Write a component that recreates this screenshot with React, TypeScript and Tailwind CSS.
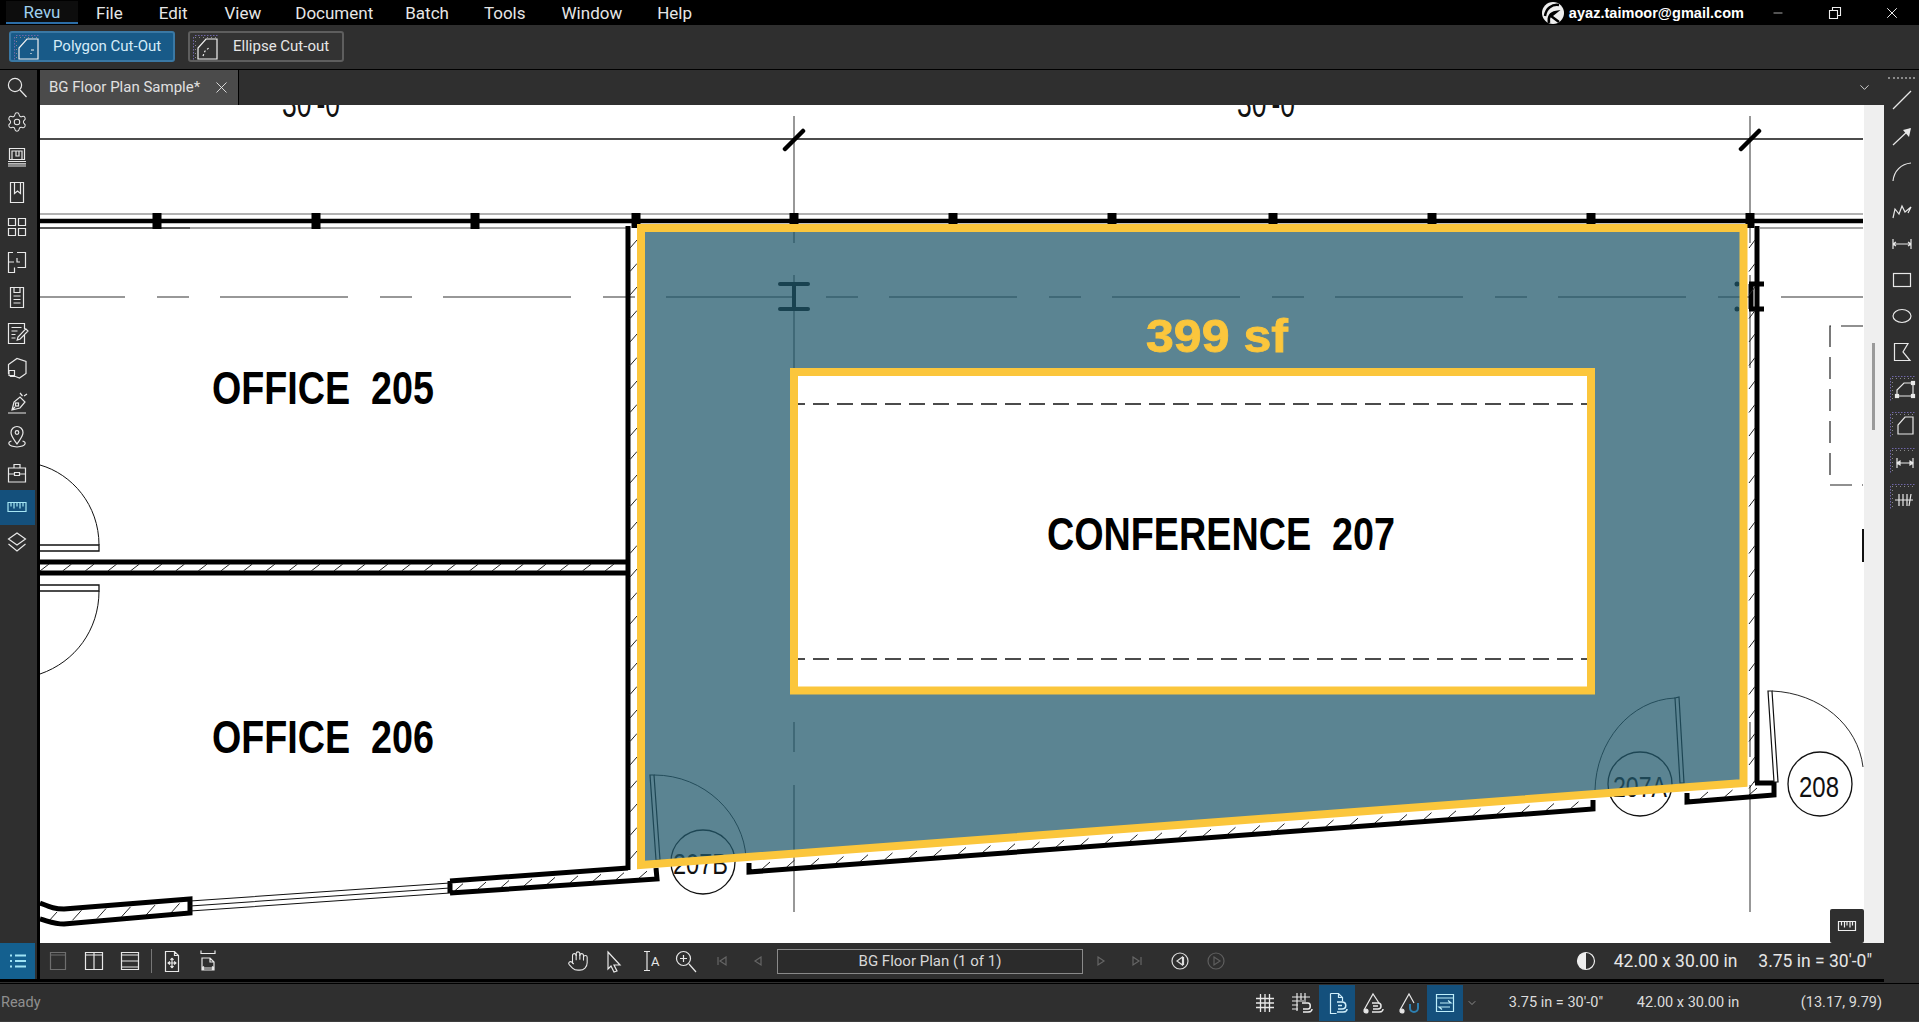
import React from "react";
import { Settings, Hand, ChevronDown, X, Minus } from "lucide-react";

const S = "#e8e8e8";
function Ic({ w = 24, h = 24, c = S, sw = 1.2, children }: { w?: number; h?: number; c?: string; sw?: number; children: React.ReactNode }) {
  return (
    <svg width={w} height={h} viewBox={`0 0 ${w} ${h}`} fill="none" stroke={c} strokeWidth={sw} className="block shrink-0">
      {children}
    </svg>
  );
}

function Ruler({ c = "#6f66a8" }: { c?: string }) {
  return (
    <g stroke={c} strokeWidth={1}>
      <path d="M4 2.500H27" strokeDasharray="1.500 1.500" />
      <path d="M2.500 4V27" strokeDasharray="1.500 1.500" />
      <path d="M4 4.500H27" stroke="#8a8a8a" strokeDasharray="1 3" />
      <path d="M4.500 4V27" stroke="#8a8a8a" strokeDasharray="1 3" />
    </g>
  );
}

const leftIcons: React.ReactNode[] = [
  <Ic key="a"><circle cx="10" cy="10" r="6.6" /><path d="M15 15l6.5 7" /></Ic>,
  <Settings key="b" size={22} strokeWidth={1.1} color={S} />,
  <Ic key="c"><path d="M4.500 3.500h15v11h-15zM7 14V6h10v8M11 6v5h3V6M3 16.500h18M3 18.800h18M3 21h18" /></Ic>,
  <Ic key="d"><path d="M5.500 2.500h13v20h-13zM9.500 2.500v11l3-2.500 3 2.500v-11" /></Ic>,
  <Ic key="e"><path d="M3.500 3.500h7v7h-7zM13.500 3.500h7v7h-7zM3.500 13.500h7v7h-7zM13.500 13.500h7v7h-7z" /></Ic>,
  <Ic key="f"><path d="M12 2.500h8.500v15h-8M8 2.500H3.500v20h6v-5M3.500 12h5.500M15 12h-3V8" /></Ic>,
  <Ic key="g"><path d="M5.500 2.500h13v20h-13zM9 2.500v5h6v-5M8.500 11h7M8.500 14.500h7M8.500 18h7" /></Ic>,
  <Ic key="h"><path d="M19.500 9V3.500H3.500v20h16V15M6.500 7.500h10M6.500 11h6M6.500 14.500h4M6.500 18h4M13 17l-.8 3 3-1L23 11l-2.200-2.200z" /></Ic>,
  <Ic key="i"><path d="M3.500 9.500L12 3.500l9 3v12l-6.500 4.500-4-1.500H5.500l-2-3zM4 15.500h5.500v5H4z" /></Ic>,
  <Ic key="j"><path d="M3 23h18M7 20l2-8 6-5 5 5-5 6zM15 3l2.500 3M19 6l3-2M7 20l3-3" /><rect x="10.500" y="13" width="3" height="3" /></Ic>,
  <Ic key="k"><path d="M12 19c-4-6-6-8-6-11.500a6 6 0 0 1 12 0C18 11 16 13 12 19z" /><circle cx="12" cy="7.500" r="1.800" /><path d="M6.500 16c-4 1-4.500 5 5.500 6 10-1 9.500-5 5.500-6" /></Ic>,
  <Ic key="l"><path d="M3.500 8h17v14h-17zM9 8V4.500h6V8M3.500 14h6M14.500 14h6M9.500 12.500h5v3h-5z" /></Ic>,
  <Ic key="m" c="#a6e6f4"><path d="M3 7.500h18v9H3zM6 7.500v4M9 7.500v6M12 7.500v4M15 7.500v6M18 7.500v4" /></Ic>,
  <Ic key="n"><path d="M12 3l8.500 6-8.500 6-8.500-6zM3.500 14l8.500 7 8.500-7" /></Ic>,
];

const rightIcons: React.ReactNode[] = [
  <Ic key="a"><path d="M3 21L21 3" /></Ic>,
  <Ic key="b"><path d="M3 21L20 5" /><path d="M13 6l8-2-2 9z" fill={S} stroke="none" /></Ic>,
  <Ic key="c"><path d="M3 21C4 11 11 4 21 3" /></Ic>,
  <Ic key="d"><path d="M3 22l2-9 4 5 3-8 3 6 6-5-3 6" /></Ic>,
  <Ic key="e"><path d="M3 7v10M21 7v10M3 12h18M3 12l3-2M3 12l3 2M21 12l-3-2M21 12l-3 2" /></Ic>,
  <Ic key="f"><rect x="3.500" y="5.500" width="17" height="13" /></Ic>,
  <Ic key="g"><ellipse cx="12" cy="12" rx="9" ry="6.500" /></Ic>,
  <Ic key="h"><path d="M4.500 3.500L18 3.500 13 12l7 8.500H4.500z" /></Ic>,
  <Ic key="i" w={28} h={28}><Ruler /><path d="M9 22v-6l7-7h9v13z" /><rect x="7.500" y="20.500" width="3" height="3" fill={S} /><rect x="23.500" y="7.500" width="3" height="3" fill={S} /><rect x="23.500" y="20.500" width="3" height="3" fill={S} /></Ic>,
  <Ic key="j" w={28} h={28}><Ruler /><path d="M10 24V15l7-8h8v17z" /></Ic>,
  <Ic key="k" w={28} h={28}><Ruler /><path d="M9 12v10M25 12v10M9 17h16M9 17l3-2v4zM25 17l-3-2v4z" /></Ic>,
  <Ic key="l" w={28} h={28}><Ruler /><path d="M7 18h18M11 12v12M15 12v12M19 12v12M23 12l-2 12" /></Ic>,
];

function Cell({ w = 36, children }: { w?: number; children: React.ReactNode }) {
  return <div className="flex items-center justify-center h-full shrink-0" style={{ width: w }}>{children}</div>;
}

function Hatch() {
  const lines: string[] = [];
  for (let y = 240; y < 860; y += 23.5) lines.push(`M630 ${y + 8}L637 ${y}`);
  for (let y = 240; y < 790; y += 23.5) lines.push(`M1749 ${y + 8}L1755 ${y}`);
  for (let x = 40; x < 625; x += 22.6) lines.push(`M${x} 571L${x + 9} 564`);
  for (let x = 762; x < 1590; x += 24.5) {
    const y = 872 - (x - 749) * 0.0746;
    lines.push(`M${x} ${y - 2}L${x + 8} ${y - 9}`);
  }
  for (let x = 1700; x < 1768; x += 24.5) {
    const y = 802 - (x - 1687) * 0.08;
    lines.push(`M${x} ${y - 2}L${x + 8} ${y - 9}`);
  }
  for (let x = 455; x < 650; x += 23) {
    const y = 893 - (x - 450) * 0.068;
    lines.push(`M${x} ${y - 2}L${x + 8} ${y - 9}`);
  }
  for (let x = 48; x < 185; x += 24.5) {
    const y = 923 - (x - 48) * 0.07;
    lines.push(`M${x} ${y - 1}L${x + 9} ${y - 11}`);
  }
  return <path d={lines.join("")} stroke="#222" strokeWidth={1} fill="none" />;
}

function Plan() {
  const cols = [157, 316, 475, 636, 794, 953, 1112, 1273, 1432, 1591, 1750];
  const font = { fontFamily: '"Liberation Sans", Arial, sans-serif' };
  return (
    <svg width={1824} height={838} viewBox="40 105 1824 838" className="block shrink-0 bg-white" style={font}>
      <text x={282} y={117} fontSize={38} textLength={58} lengthAdjust="spacingAndGlyphs" fill="#111">30'-0</text>
      <text x={1237} y={117} fontSize={38} textLength={58} lengthAdjust="spacingAndGlyphs" fill="#111">30'-0</text>
      <path d="M40 139H1863" stroke="#111" strokeWidth={1.3} />
      <path d="M794 116V243M794 275V368M794 722V752M794 785V912M1750 116V243M1750 275V368M1750 722V757M1750 785V912" stroke="#777" strokeWidth={1.5} fill="none" />
      <path d="M785 149L803 131M1741 149L1759 131" stroke="#000" strokeWidth={4.5} strokeLinecap="round" />
      <path d="M40 214H1863" stroke="#666" strokeWidth={1.2} />
      <path d="M40 221H1863" stroke="#000" strokeWidth={4.5} />
      <path d="M40 228H190" stroke="#222" strokeWidth={1.5} />
      <path d="M190 228H630M1760 228H1863" stroke="#888" strokeWidth={1.5} />
      {cols.map((x) => (
        <rect key={x} x={x - 4.5} y={213} width={9} height={x <= 475 ? 16 : 15} fill="#000" />
      ))}
      <path d="M40 297H1863" stroke="#333" strokeWidth={1.1} strokeDasharray="128 32 32 31" strokeDashoffset={43} />

      {/* walls */}
      <path d="M628 226V870M40 562H630M40 573H630" stroke="#000" strokeWidth={5} fill="none" />
      <path d="M1757 226V783M1749 284H1764M1749 309H1764M1751 284V309" stroke="#000" strokeWidth={5} fill="none" />
      <path d="M780 284H808M780 309H808M794 284V309" stroke="#000" strokeWidth={4} strokeLinecap="round" fill="none" />
      <circle cx={1737} cy={284} r={2.5} fill="#000" />
      <circle cx={1737} cy={309} r={2.5} fill="#000" />
      <Hatch />
      <path d="M450 881L628 868M450 893L657 879L656 868M40 903C50 907 54 909 64 909L190 899V913L64 924C54 924 48 921 40 919M450 881V893" stroke="#000" strokeWidth={5} fill="none" />
      <path d="M190 901L450 883M190 906L450 888M190 911L450 893" stroke="#111" strokeWidth={1.1} fill="none" />
      <path d="M749 863V872L1593 809V800M1687 793V802L1774 795V783H1755" stroke="#000" strokeWidth={5} fill="none" />

      {/* doors */}
      <path d="M40 545H99V551H40M40 585H99V591H40" stroke="#111" strokeWidth={1.3} fill="#fff" />
      <path d="M40 465C72 474 99 505 99 545M99 591C99 630 75 662 40 674" stroke="#111" strokeWidth={1} fill="none" />
      <path d="M650 775L654 775L660 860H656ZM1675 698L1679 697L1684 783H1680ZM1768 691L1772 691L1778 782H1774Z" stroke="#111" strokeWidth={1.2} fill="#fff" />
      <path d="M654 775C705 775 744 815 746 858M1675 698C1630 700 1596 742 1595 790M1772 691C1820 693 1858 725 1863 767" stroke="#111" strokeWidth={0.9} fill="none" />
      <circle cx={703} cy={862} r={32} fill="#fff" stroke="#111" strokeWidth={1.3} />
      <circle cx={1640} cy={784} r={32} fill="#fff" stroke="#111" strokeWidth={1.3} />
      <circle cx={1820} cy={784} r={32} fill="#fff" stroke="#111" strokeWidth={1.3} />
      <text x={673} y={874} fontSize={30} textLength={55} lengthAdjust="spacingAndGlyphs" fill="#111">207B</text>
      <text x={1613} y={797} fontSize={30} textLength={54} lengthAdjust="spacingAndGlyphs" fill="#111">207A</text>
      <text x={1799} y={797} fontSize={30} textLength={40} lengthAdjust="spacingAndGlyphs" fill="#111">208</text>

      {/* other */}
      <path d="M1863 326H1830V485H1863" stroke="#222" strokeWidth={1.2} strokeDasharray="22 10" fill="none" />
      <path d="M1863 529V562" stroke="#111" strokeWidth={2} />

      {/* labels */}
      <text x={212} y={404} fontSize={46} fontWeight={700} textLength={222} lengthAdjust="spacingAndGlyphs" fill="#000" className="whitespace-pre">OFFICE  205</text>
      <text x={212} y={753} fontSize={46} fontWeight={700} textLength={222} lengthAdjust="spacingAndGlyphs" fill="#000" className="whitespace-pre">OFFICE  206</text>
      <text x={1047} y={550} fontSize={46} fontWeight={700} textLength={348} lengthAdjust="spacingAndGlyphs" fill="#000" className="whitespace-pre">CONFERENCE  207</text>
      <path d="M798 404H1587M798 659H1587" stroke="#111" strokeWidth={1.5} strokeDasharray="16 8" strokeDashoffset={9} />

      {/* area markup */}
      <path d="M641 228H1743.5V783L641 865ZM794 372V690.5H1591V372Z" fill="#22596c" fillOpacity={0.74} fillRule="evenodd" />
      <path d="M641 228H1743.5V783L641 865Z" fill="none" stroke="#fbc63c" strokeWidth={8} />
      <path d="M794 372H1591V690.5H794Z" fill="none" stroke="#fbc63c" strokeWidth={8} />
      <text x={1146} y={352} fontSize={46} fontWeight={700} textLength={142} lengthAdjust="spacingAndGlyphs" fill="#fbc63c" stroke="#fbc63c" strokeWidth={0.8} className="whitespace-pre">399 sf</text>
    </svg>
  );
}

export default function App() {
  const menus: [string, string][] = [
    ["File", "ml-[18px]"], ["Edit", "ml-[36px]"], ["View", "ml-[37px]"], ["Document", "ml-[34px]"],
    ["Batch", "ml-[32px]"], ["Tools", "ml-[35px]"], ["Window", "ml-[36px]"], ["Help", "ml-[35px]"],
  ];
  return (
    <div className="w-[1919px] h-[1022px] overflow-hidden flex flex-col bg-[#2f2f2f] text-[#e6e6e6] font-['Roboto',sans-serif]">
      {/* menu bar */}
      <div className="h-[25px] bg-black flex items-center shrink-0 relative text-[17px] leading-[20px]">
        <div className="ml-[6px] w-[72px] h-[23px] border-b-[2px] border-[#2c6ea8] bg-[#0d0d0d] flex items-center justify-center text-[#9fd0ee]">Revu</div>
        {menus.map(([m, c]) => (
          <span key={m} className={c}>{m}</span>
        ))}
        <div className="ml-auto flex items-center">
          <svg width="24" height="24" viewBox="0 0 24 24" className="block mr-[4px]">
            <circle cx="12" cy="12" r="11" fill="#eee" />
            <path d="M4 15C5 7 11 3 18 4M8 22c-1-6 1-10 7-11l-5 4 8 6" fill="none" stroke="#000" strokeWidth="2.5" />
          </svg>
          <span className="font-['Liberation_Sans',sans-serif] font-bold text-[14.5px] tracking-[0.03px] text-white">ayaz.taimoor@gmail.com</span>
          <Minus size={14} strokeWidth={1.2} className="ml-[27px] shrink-0" color="#eee" />
          <svg width="14" height="14" viewBox="0 0 14 14" fill="none" stroke="#eee" strokeWidth="1.1" className="ml-[43px] block shrink-0"><path d="M1.500 4.500h8v8h-8zM4.500 4.500v-3h8v8h-3" /></svg>
          <X size={18} strokeWidth={1.3} color="#f2f2f2" className="ml-[41px] mr-[18px] shrink-0" />
        </div>
      </div>

      {/* tool bar */}
      <div className="h-[45px] shrink-0 border-b border-black flex items-center pl-[9px] pb-[1px] text-[15px]">
        <div className="h-[31px] w-[166px] rounded-[3px] border-2 border-[#3a78a4] bg-[#185a88] flex items-center text-[#d5ecf8]">
          <div className="w-[34px] ml-[1px]">
            <Ic w={28} h={28} c="#f2f2f2"><Ruler /><path d="M7 26V15l8-9h11v20zM19 17h3M19 20v1" /></Ic>
          </div>
          <span className="ml-[7px]">Polygon Cut-Out</span>
        </div>
        <div className="ml-[13px] h-[31px] w-[156px] rounded-[3px] border-2 border-[#5e5e5e] bg-[#333] flex items-center">
          <div className="w-[34px] ml-[1px]">
            <Ic w={28} h={28} c="#f2f2f2"><Ruler /><path d="M7 26V15l8-9h11v20z" /><path d="M12 23l2-5 5-4" strokeDasharray="2 2" /></Ic>
          </div>
          <span className="ml-[8px]">Ellipse Cut-out</span>
        </div>
      </div>

      {/* body */}
      <div className="h-[909px] shrink-0 flex">
        {/* left rail */}
        <div className="w-[40px] shrink-0 border-r-[3px] border-black flex flex-col">
          {leftIcons.map((ic, i) => (
            <div key={i} className={`h-[35px] w-[35px] pb-[2px] pr-[1px] flex items-center justify-center shrink-0 ${i === 12 ? "bg-[#14507c]" : ""}`}>{ic}</div>
          ))}
          <div className="mt-auto h-[36px] w-[35px] bg-[#14608f] flex items-center justify-center">
            <Ic w={20} h={20} c="#9fe3f5" sw={2}><path d="M7 4.500h11M7 10h11M7 15.500h11" /><path d="M2 4.500h2M2 10h2M2 15.500h2" /></Ic>
          </div>
        </div>

        {/* centre */}
        <div className="w-[1844px] shrink-0 flex flex-col">
          <div className="h-[35px] flex shrink-0">
            <div className="w-[199px] bg-[#4b4b4b] flex items-center border-r border-black text-[15px] text-[#e0e0e0]">
              <span className="ml-[9px]">BG Floor Plan Sample*</span>
              <X size={19} strokeWidth={1.1} color="#eee" className="ml-[12px]" />
            </div>
            <ChevronDown size={15} strokeWidth={1.5} color="#ddd" className="ml-[1618px] self-center" />
          </div>
          <div className="h-[838px] flex shrink-0 relative">
            <Plan />
            <div className="w-[20px] bg-[#efefef] shrink-0">
              <div className="ml-[8px] mt-[238px] w-[3px] h-[87px] bg-[#9a9a9a]" />
            </div>
            <div className="absolute left-[1790px] top-[804px] w-[34px] h-[34px] bg-[#2f2f2f] rounded-[2px] flex items-center justify-center">
              <Ic w={22} h={22} c="#eee"><path d="M2.500 6.500h17v9h-17zM5.500 6.500v4M8.500 6.500v6M11 6.500v4M14 6.500v6M16.500 6.500v4" /></Ic>
            </div>
          </div>
          {/* view bar */}
          <div className="h-[36px] flex items-center shrink-0">
            <Cell><Ic c="#6e6e6e"><path d="M4.500 3.500h15v17h-15zM4.500 6h15" /></Ic></Cell>
            <Cell><Ic><path d="M3.500 3.500h17v17h-17zM12 3.500v17M3.500 6h17" /></Ic></Cell>
            <Cell><Ic><path d="M3.500 3.500h17v17h-17zM3.500 12h17M3.500 6h17M3.500 18h17" /></Ic></Cell>
            <div className="w-[6px] h-[24px] flex justify-center shrink-0"><div className="w-px h-full bg-[#777]" /></div>
            <Cell><Ic><path d="M5.500 2.500h9l4 4v16h-13zM14.500 2.500v4h4M12 9v10M7.500 14h9M12 9l-1.500 2M12 9l1.500 2M12 19l-1.500-2M12 19l1.500-2M8 14l2-1.500M8 14l2 1.500M16 14l-2-1.500M16 14l-2 1.500" /></Ic></Cell>
            <Cell><Ic><path d="M5 1.500v3h14v-3M6 21V9h8l4 4v8zM14 9v4h4M6 19h12M6 19l2-1.500M6 19l2 1.500M18 19l-2-1.500M18 19l-2 1.500" /></Ic></Cell>
            <div className="w-[334px] shrink-0" />
            <Cell><Hand size={22} strokeWidth={1.2} color={S} /></Cell>
            <Cell><Ic><path d="M6 3l12 13-6 0 3 6-3 1-3-6-3 3z" /></Ic></Cell>
            <Cell>
              <Ic><path d="M6 2.500h6M9 2.500v19M6 21.500h6" /><text x="13" y="17" fontSize="13" fill={S} stroke="none" fontFamily="Roboto, sans-serif">A</text></Ic>
            </Cell>
            <Cell><Ic><circle cx="9.500" cy="9.500" r="7" /><path d="M15 15l7 8M9.500 6v7M6 9.500h7" /></Ic></Cell>
            <Cell><Ic w={12} h={12} c="#666"><path d="M2 2v8" /><path d="M10 2L4 6l6 4z" /></Ic></Cell>
            <Cell><Ic w={12} h={12} c="#666"><path d="M9 2L3 6l6 4z" /></Ic></Cell>
            <div className="ml-[1px] w-[306px] h-[25px] border border-[#8a8a8a] bg-[#2b2b2b] flex items-center justify-center text-[15px] text-[#d8d8d8] shrink-0">BG Floor Plan (1 of 1)</div>
            <Cell><Ic w={12} h={12} c="#666"><path d="M3 2l6 4-6 4z" /></Ic></Cell>
            <Cell><Ic w={12} h={12} c="#666"><path d="M10 2v8" /><path d="M2 2l6 4-6 4z" /></Ic></Cell>
            <div className="w-[7px] shrink-0" />
            <Cell><Ic w={20} h={20} c="#ddd"><circle cx="10" cy="10" r="8" /><path d="M12.500 6L7 10l5.500 4zM13.500 6v8" /></Ic></Cell>
            <Cell><Ic w={20} h={20} c="#5e5e5e"><circle cx="10" cy="10" r="8" /><path d="M8 6l6 4-6 4z" /></Ic></Cell>
            <div className="ml-auto flex items-center pr-[12px] text-[17.5px] text-[#e6e6e6]">
              <svg width="20" height="20" viewBox="0 0 20 20" className="block mr-[18px]"><circle cx="10" cy="10" r="8.500" fill="none" stroke="#eee" strokeWidth="1.2" /><path d="M10 1.500a8.500 8.500 0 0 0 0 17z" fill="#eee" /></svg>
              <span>42.00 x 30.00 in</span>
              <span className="ml-[21px]">3.75 in = 30'-0"</span>
            </div>
          </div>
        </div>

        {/* right rail */}
        <div className="w-[35px] shrink-0 flex flex-col items-center">
          <div className="h-[12px] w-full flex justify-center items-center">
            <div className="w-[27px] border-t-2 border-dotted border-[#8a8a8a] mt-[3px]" />
          </div>
          {rightIcons.map((ic, i) => (
            <div key={i} className="h-[36px] flex items-center justify-center shrink-0">{ic}</div>
          ))}
        </div>
      </div>

      {/* separator */}
      <div className="h-[6px] shrink-0 flex flex-col">
        <div className="h-[3px] w-[1884px] bg-black" />
        <div className="h-[1px] mt-[1px] bg-black" />
      </div>

      {/* status */}
      <div className="h-[37px] flex items-center shrink-0 border-b border-[#3d3d3d] text-[14.5px]">
        <span className="ml-[1px] text-[#8f8f8f]">Ready</span>
        <div className="ml-auto h-full flex items-center pr-[37px] text-[#dcdcdc]">
          <Cell><Ic sw={1.3}><path d="M7.500 3v18M12 3v18M16.500 3v18M3 7.500h18M3 12h18M3 16.500h18" /></Ic></Cell>
          <Cell><Ic><path d="M8 2v18M12 2v7M16 2v7M3 6h18M3 10h14M3 14h6M3 18h6" /><path d="M13 12h6c3 0 3 6 0 6M19 18h-5M14 21h5c4 0 4-3 4-3" stroke="#eee" strokeWidth={1.5} /></Ic></Cell>
          <div className="w-[36px] h-full bg-[#14507c] flex items-center justify-center"><Ic c="#cfeefa"><path d="M5.500 2.500h8l4 4v4M13.500 2.500v4h4M5.500 2.500v20h6" /><path d="M12 11h5c5 0 5 7 0 7h-4M13 14.500h4M12 21h6c4 0 4-3 4-3" strokeWidth={1.6} /></Ic></div>
          <Cell><Ic><path d="M3 19L12 3l6 9" /><circle cx="5" cy="20" r="2" fill={S} /><path d="M11 12h6c4 0 4 6 0 6h-5M12 15h5M11 21h7c4 0 4-3 4-3" strokeWidth={1.5} /></Ic></Cell>
          <Cell><Ic><path d="M3 19L12 3l5 9" /><circle cx="5" cy="20" r="2" fill={S} /><path d="M13 13v4a4 4 0 0 0 8 0v-5" stroke="#2d7fb0" strokeWidth={2} /></Ic></Cell>
          <div className="w-[36px] h-full bg-[#14507c] flex items-center justify-center"><Ic c="#bdeefa"><path d="M3.500 3.500h17v17h-17zM3.500 7h17M7 12h11l-3-2.500M17 16H6l3 2.500" /></Ic></div>
          <ChevronDown size={12} strokeWidth={1.3} color="#bbb" className="ml-[3px]" />
          <span className="ml-[31px] w-[96px]">3.75 in = 30'-0"</span>
          <span className="ml-[32px] w-[103px]">42.00 x 30.00 in</span>
          <span className="ml-[61px]">(13.17, 9.79)</span>
        </div>
      </div>
    </div>
  );
}
